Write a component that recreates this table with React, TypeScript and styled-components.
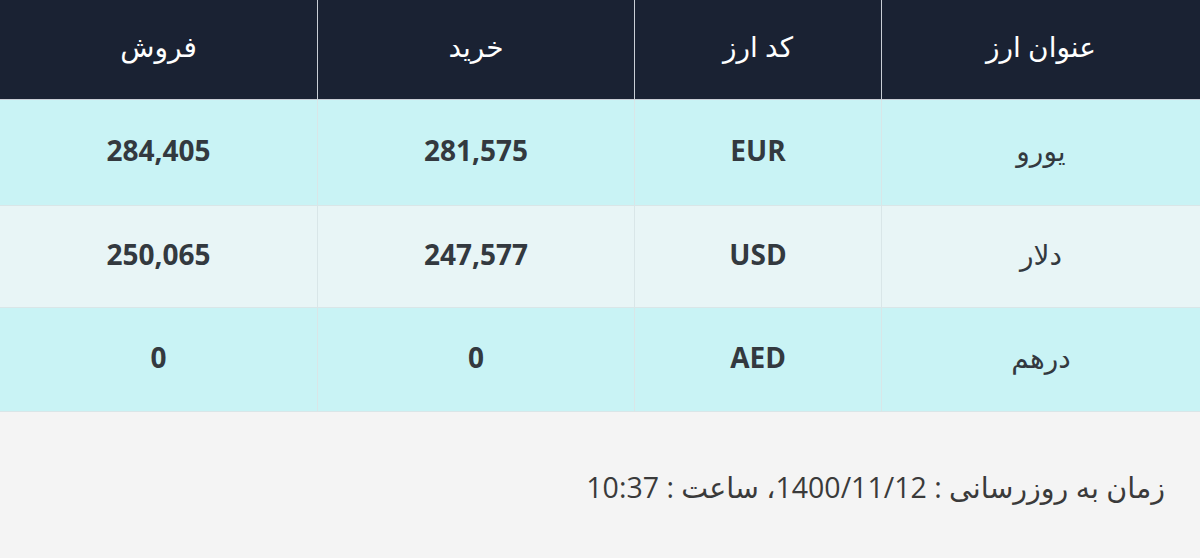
import React from "react";
import styled, { createGlobalStyle } from "styled-components";

const Global = createGlobalStyle`
  html, body { margin: 0; padding: 0; background: #f4f4f4; }
  body { font-family: "Open Sans", "DejaVu Sans", sans-serif; }
`;

const Page = styled.div`
  direction: rtl;
  width: 1200px;
  background: #f4f4f4;
`;

const Table = styled.div`
  display: grid;
  grid-template-columns: 319px 247px 317px 317px;
`;

const HeadCell = styled.div<{ $last?: boolean }>`
  height: 100px;
  background: #1a2233;
  color: #ffffff;
  border-bottom: 1px solid #c9ced6;
  border-left: ${(p) => (p.$last ? "none" : "1px solid #c9ced6")};
  display: flex;
  align-items: center;
  justify-content: center;
  font-size: 28px;
  font-weight: 400;
  padding-bottom: 7px;
  box-sizing: border-box;
`;

const Cell = styled.div<{ $alt: boolean; $h: number; $last?: boolean; $name?: boolean }>`
  height: ${(p) => p.$h}px;
  background: ${(p) => (p.$alt ? "#e8f5f6" : "#c9f3f5")};
  border-bottom: 1px solid #d9e6e8;
  border-left: ${(p) => (p.$last ? "none" : "1px solid #d9e6e8")};
  display: flex;
  align-items: center;
  justify-content: center;
  color: #33393f;
  font-size: 28px;
  font-weight: ${(p) => (p.$name ? 400 : 700)};
  padding-bottom: 5px;
  box-sizing: border-box;
`;

const Footer = styled.div`
  height: 146px;
  display: flex;
  align-items: center;
  padding-right: 35px;
  color: #3a3a3a;
  font-size: 28.5px;
  padding-top: 4px;
  box-sizing: border-box;
`;

const rows = [
  { name: "یورو", code: "EUR", buy: "281,575", sell: "284,405", h: 106 },
  { name: "دلار", code: "USD", buy: "247,577", sell: "250,065", h: 102 },
  { name: "درهم", code: "AED", buy: "0", sell: "0", h: 104 },
];

export default function App() {
  return (
    <Page>
      <Global />
      <Table>
        <HeadCell>عنوان ارز</HeadCell>
        <HeadCell>کد ارز</HeadCell>
        <HeadCell>خرید</HeadCell>
        <HeadCell $last>فروش</HeadCell>
        {rows.map((r, i) => (
          <React.Fragment key={r.code}>
            <Cell $h={r.h} $alt={i % 2 === 1} $name>{r.name}</Cell>
            <Cell $h={r.h} $alt={i % 2 === 1}>{r.code}</Cell>
            <Cell $h={r.h} $alt={i % 2 === 1}>{r.buy}</Cell>
            <Cell $h={r.h} $alt={i % 2 === 1} $last>{r.sell}</Cell>
          </React.Fragment>
        ))}
      </Table>
      <Footer>زمان به روزرسانی : 1400/11/12، ساعت : 10:37</Footer>
    </Page>
  );
}
